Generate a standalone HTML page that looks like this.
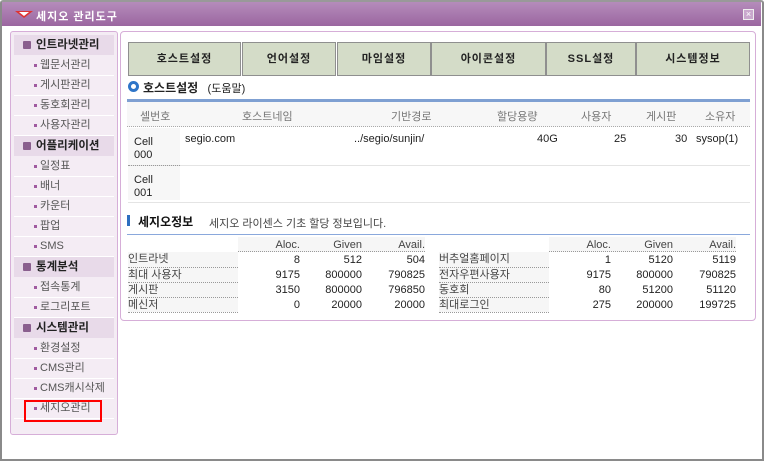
<!DOCTYPE html><html><head><meta charset="utf-8"><style>
*{margin:0;padding:0;box-sizing:border-box}
body{width:765px;height:462px;background:#fff;font-family:"Liberation Sans","Noto Sans CJK KR",sans-serif;font-size:11px;color:#333;position:relative;overflow:hidden}
.a{position:absolute}
#win{left:0;top:0;width:764px;height:461px;border:2px solid #8a8a8a;border-top-color:#999;border-radius:3px 3px 0 0;background:#fff}
#tb{left:2px;top:2px;width:759px;height:24px;background:linear-gradient(#b58cbb,#9b66a0);}
#side{left:10px;top:31px;width:108px;height:404px;border:1px solid #d6aed8;border-radius:3px;background:#f4ecf4;padding:3px}
.h{height:20px;background:#e8dae9;font-weight:bold;color:#222;font-size:11.5px;line-height:20px;padding-left:22px;position:relative;margin-bottom:1px}
.h:before{content:"";position:absolute;left:9px;top:6px;width:8px;height:8px;background:#8a5f8e;border-radius:1px}
.i{height:20px;line-height:19px;padding-left:26px;color:#555;position:relative;border-bottom:1px solid #fff;font-size:11px}
.i:before{content:"";position:absolute;left:20px;top:8px;width:3px;height:3px;background:#a05aa0}
#main{left:120px;top:31px;width:636px;height:290px;border:1px solid #d6aed8;border-radius:4px;background:#fff}
.tab{top:42px;height:34px;background:#d4dcc8;border:1px solid #8f8f8f;font-weight:bold;font-size:11px;text-align:center;line-height:32px;color:#222;letter-spacing:1px}
td{padding:0}
.hd{top:102px;height:25px;background:#f7f7f7;border-bottom:1px dotted #aaa;left:127px;width:623px}
.c{color:#777;font-size:11px}
.n{text-align:right;font-size:11px;color:#222}
.lb{font-size:11px;color:#444;border-bottom:1px dotted #999;height:15px;line-height:14px;background:#f6f6f6}
</style></head><body>
<div id="win" class="a"></div>
<div id="tb" class="a"></div>
<svg class="a" style="left:14px;top:9px" width="20" height="10"><path d="M1 2 L19 2 L10 9 Z" fill="#d33"/><path d="M5 3 L15 3 L10 7Z" fill="#fff"/></svg>
<div class="a" style="left:36px;top:8px;color:#fff;font-weight:bold;font-size:11px;letter-spacing:1px">세지오 관리도구</div>
<div class="a" style="left:743px;top:9px;width:11px;height:11px;background:#c9a8cd;border:1px solid #eee;color:#fff;font-size:9px;line-height:9px;text-align:center">×</div>

<div id="side" class="a">
<div class="h">인트라넷관리</div>
<div class="i">웹문서관리</div><div class="i">게시판관리</div><div class="i">동호회관리</div><div class="i">사용자관리</div>
<div class="h">어플리케이션</div>
<div class="i">일정표</div><div class="i">배너</div><div class="i">카운터</div><div class="i">팝업</div><div class="i">SMS</div>
<div class="h">통계분석</div>
<div class="i">접속통계</div><div class="i">로그리포트</div>
<div class="h">시스템관리</div>
<div class="i">환경설정</div><div class="i">CMS관리</div><div class="i">CMS캐시삭제</div><div class="i">세지오관리</div>
</div>
<div class="a" style="left:24px;top:400px;width:78px;height:22px;border:2px solid #f00"></div>

<div id="main" class="a"></div>
<div class="a tab" style="left:128px;width:113px">호스트설정</div>
<div class="a tab" style="left:242px;width:94px">언어설정</div>
<div class="a tab" style="left:337px;width:94px">마임설정</div>
<div class="a tab" style="left:431px;width:115px">아이콘설정</div>
<div class="a tab" style="left:546px;width:90px">SSL설정</div>
<div class="a tab" style="left:636px;width:114px">시스템정보</div>

<div class="a" style="left:128px;top:81px;width:11px;height:11px;border:3px solid #2e75c8;border-radius:50%"></div>
<div class="a" style="left:143px;top:79px;font-weight:bold;font-size:12px;color:#222">호스트설정 <span style="font-weight:normal;font-size:11px;margin-left:6px">(도움말)</span></div>
<div class="a" style="left:127px;top:99px;width:623px;height:3px;background:#7fa0d2"></div>
<div class="a hd"></div>
<div class="a c" style="left:140px;top:108px">셀번호</div>
<div class="a c" style="left:242px;top:108px">호스트네임</div>
<div class="a c" style="left:391px;top:108px">기반경로</div>
<div class="a c" style="left:497px;top:108px">할당용량</div>
<div class="a c" style="left:581px;top:108px">사용자</div>
<div class="a c" style="left:646px;top:108px">게시판</div>
<div class="a c" style="left:705px;top:108px">소유자</div>
<div class="a" style="left:128px;top:128px;width:52px;height:72px;background:#f7f7f7"></div>
<div class="a" style="left:134px;top:136px;line-height:13px;color:#222">Cell<br>000</div>
<div class="a" style="left:185px;top:133px;color:#222">segio.com</div>
<div class="a" style="left:354px;top:133px;color:#222">../segio/sunjin/</div>
<div class="a" style="left:537px;top:133px;color:#222">40G</div>
<div class="a" style="left:614px;top:133px;color:#222">25</div>
<div class="a" style="left:675px;top:133px;color:#222">30</div>
<div class="a" style="left:696px;top:133px;color:#222">sysop(1)</div>
<div class="a" style="left:128px;top:165px;width:622px;border-top:1px solid #e4e4e4"></div>
<div class="a" style="left:128px;top:165px;width:52px;border-top:1px dotted #999"></div>
<div class="a" style="left:134px;top:174px;line-height:13px;color:#222">Cell<br>001</div>
<div class="a" style="left:128px;top:202px;width:622px;border-top:1px solid #e4e4e4"></div>

<div class="a" style="left:127px;top:215px;width:3px;height:11px;background:#2e6fc0"></div>
<div class="a" style="left:138px;top:213px;font-weight:bold;font-size:12px;color:#111">세지오정보</div>
<div class="a" style="left:209px;top:215px;font-size:11px;color:#444">세지오 라이센스 기초 할당 정보입니다.</div>
<div class="a" style="left:127px;top:234px;width:623px;height:1px;background:#8aa8dc"></div>

<div class="a" style="left:128px;top:237px;width:297px">
<div style="position:relative;height:15px;margin-left:110px;background:#f6f6f6;border-bottom:1px dotted #999"></div>
</div>
<div class="a" style="left:439px;top:237px;width:297px">
<div style="position:relative;height:15px;margin-left:110px;background:#f6f6f6;border-bottom:1px dotted #999"></div>
</div>

<div class="a" style="left:128px;top:237px">
<table style="border-collapse:collapse;font-size:11px" cellspacing=0>
<tr style="height:15px;color:#444"><td style="width:110px"></td><td class="n" style="width:62px;color:#444">Aloc.</td><td class="n" style="width:62px;color:#444">Given</td><td class="n" style="width:63px;color:#444">Avail.</td></tr>
<tr><td class="lb">인트라넷</td><td class="n">8</td><td class="n">512</td><td class="n">504</td></tr>
<tr><td class="lb">최대 사용자</td><td class="n">9175</td><td class="n">800000</td><td class="n">790825</td></tr>
<tr><td class="lb">게시판</td><td class="n">3150</td><td class="n">800000</td><td class="n">796850</td></tr>
<tr><td class="lb">메신저</td><td class="n">0</td><td class="n">20000</td><td class="n">20000</td></tr>
</table></div>
<div class="a" style="left:439px;top:237px">
<table style="border-collapse:collapse;font-size:11px" cellspacing=0>
<tr style="height:15px"><td style="width:110px"></td><td class="n" style="width:62px;color:#444">Aloc.</td><td class="n" style="width:62px;color:#444">Given</td><td class="n" style="width:63px;color:#444">Avail.</td></tr>
<tr><td class="lb">버추얼홈페이지</td><td class="n">1</td><td class="n">5120</td><td class="n">5119</td></tr>
<tr><td class="lb">전자우편사용자</td><td class="n">9175</td><td class="n">800000</td><td class="n">790825</td></tr>
<tr><td class="lb">동호회</td><td class="n">80</td><td class="n">51200</td><td class="n">51120</td></tr>
<tr><td class="lb">최대로그인</td><td class="n">275</td><td class="n">200000</td><td class="n">199725</td></tr>
</table></div>
</body></html>
